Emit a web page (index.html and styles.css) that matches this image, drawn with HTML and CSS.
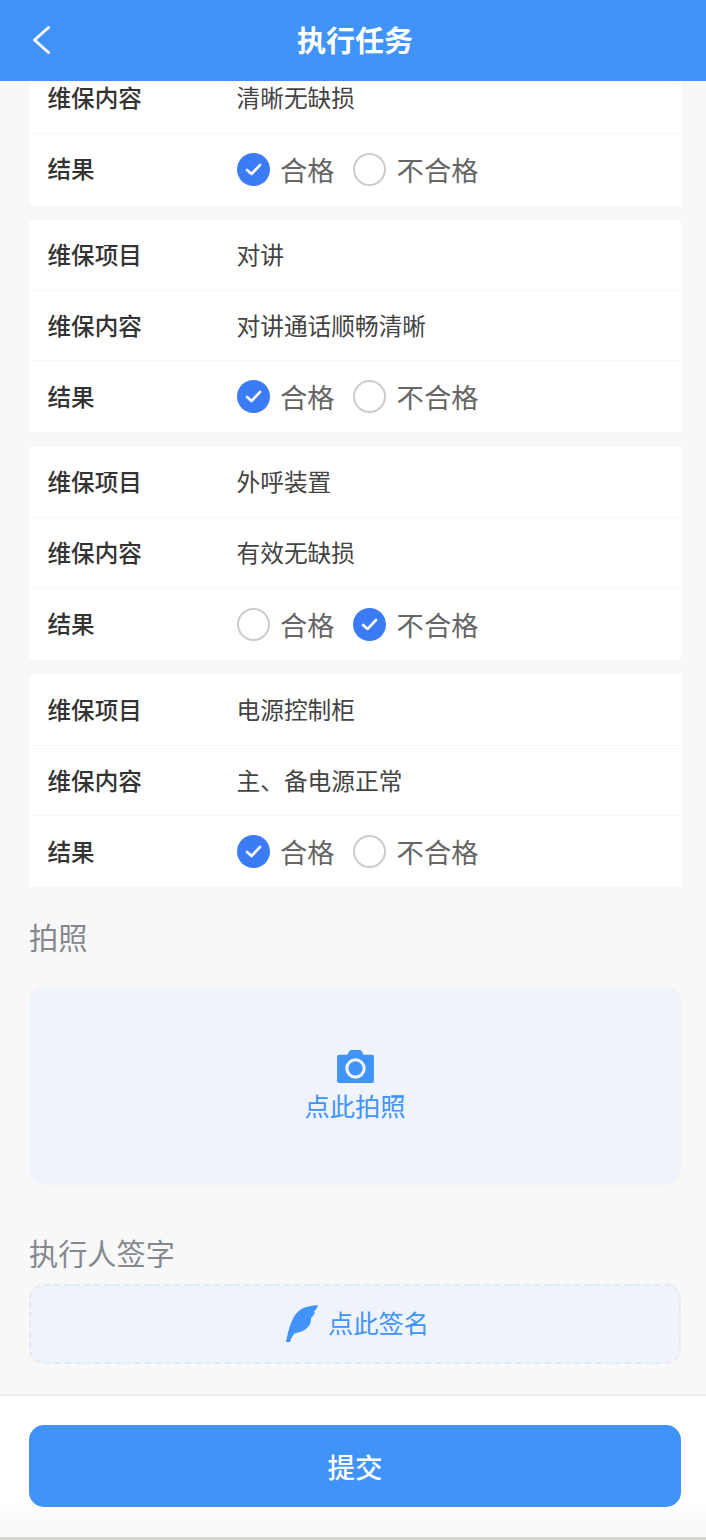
FILE: index.html
```html
<!DOCTYPE html>
<html lang="zh-CN">
<head>
    <meta charset="UTF-8">
    <meta name="viewport" content="width=device-width, initial-scale=1.0">
    <title>执行任务</title>
    <link rel="stylesheet" href="styles.css">
</head>
<body>

    <header class="topbar">
        <svg class="back" width="20" height="32" viewBox="0 0 20 32"><polyline points="18.500,3.500 4.500,16 18.500,28.500" fill="none" stroke="#fff" stroke-width="3" stroke-linecap="round" stroke-linejoin="round"/></svg>
        <h1>执行任务</h1>
    </header>

    <main class="content">
        <div class="card">
            <div class="row row-cut"><span class="label">维保内容</span><span class="value">清晰无缺损</span></div>
            <div class="row"><span class="label">结果</span>
                <div class="options">
                    <span class="radio on"><svg width="19" height="15" viewBox="0 0 19 15"><polyline points="3,8 7.5,12 16,3" fill="none" stroke="#fff" stroke-width="2.6" stroke-linecap="round" stroke-linejoin="round"/></svg></span><span class="opt">合格</span>
                    <span class="radio"></span><span class="opt">不合格</span>
                </div>
            </div>
        </div>

        <div class="card">
            <div class="row"><span class="label">维保项目</span><span class="value">对讲</span></div>
            <div class="row"><span class="label">维保内容</span><span class="value">对讲通话顺畅清晰</span></div>
            <div class="row"><span class="label">结果</span>
                <div class="options">
                    <span class="radio on"><svg width="19" height="15" viewBox="0 0 19 15"><polyline points="3,8 7.5,12 16,3" fill="none" stroke="#fff" stroke-width="2.6" stroke-linecap="round" stroke-linejoin="round"/></svg></span><span class="opt">合格</span>
                    <span class="radio"></span><span class="opt">不合格</span>
                </div>
            </div>
        </div>

        <div class="card">
            <div class="row"><span class="label">维保项目</span><span class="value">外呼装置</span></div>
            <div class="row"><span class="label">维保内容</span><span class="value">有效无缺损</span></div>
            <div class="row"><span class="label">结果</span>
                <div class="options">
                    <span class="radio"></span><span class="opt">合格</span>
                    <span class="radio on"><svg width="19" height="15" viewBox="0 0 19 15"><polyline points="3,8 7.5,12 16,3" fill="none" stroke="#fff" stroke-width="2.6" stroke-linecap="round" stroke-linejoin="round"/></svg></span><span class="opt">不合格</span>
                </div>
            </div>
        </div>

        <div class="card">
            <div class="row"><span class="label">维保项目</span><span class="value">电源控制柜</span></div>
            <div class="row"><span class="label">维保内容</span><span class="value">主、备电源正常</span></div>
            <div class="row"><span class="label">结果</span>
                <div class="options">
                    <span class="radio on"><svg width="19" height="15" viewBox="0 0 19 15"><polyline points="3,8 7.5,12 16,3" fill="none" stroke="#fff" stroke-width="2.6" stroke-linecap="round" stroke-linejoin="round"/></svg></span><span class="opt">合格</span>
                    <span class="radio"></span><span class="opt">不合格</span>
                </div>
            </div>
        </div>

        <h2 class="section-title photo-title">拍照</h2>
        <div class="photo-box">
            <svg width="37" height="33" viewBox="0 0 38 34"><path fill="#4093f9" fill-rule="evenodd" d="M2 5h8.500l2-3.500Q13.500 0 15 0h8q1.500 0 2.500 1.500l2 3.500H36q2 0 2 2v25q0 2-2 2H2q-2 0-2-2V7q0-2 2-2ZM19 8.500a10.500 10.500 0 1 0 0 21 10.500 10.500 0 0 0 0-21Z"/><circle cx="19" cy="19" r="7.300" fill="#4093f9"/></svg>
            <span class="action">点此拍照</span>
        </div>

        <h2 class="section-title sign-title">执行人签字</h2>
        <div class="sign-box">
            <svg class="feather" width="33" height="37" viewBox="0 0 33 37"><path fill="#4093f9" d="M32 0C26 .5 19 1.500 14 5 7 10 3 21 0 37h4c1-4 3-8 6-9 5-1 11-3 14-9 1-2 1-4 1-6 2-2 4-4 4-6l-2 .5C30 5 31 2.500 32 0Z"/></svg>
            <span class="action">点此签名</span>
        </div>
    </main>

    <footer class="bottombar">
        <button class="submit">提交</button>
    </footer>

</body>
</html>
```

FILE: styles.css
```css
* {
    box-sizing: border-box;
}
html, body {
    height: 100%;
}
body {
    margin: 0;
    height: 1540px;
    display: flex;
    flex-direction: column;
    overflow: hidden;
    font-family: "Noto Sans CJK SC", "Noto Sans", sans-serif;
    background-color: #f8f8f8;
    color: #333;
}
.topbar {
    height: 81px;
    flex: none;
    padding: 0 0 3px 4px;
    background-color: #4093f9;
    display: flex;
    align-items: center;
    justify-content: center;
    position: relative;
}
.topbar h1 {
    margin: 0;
    font-size: 29px;
    font-weight: 700;
    color: #fff;
}
.back {
    position: absolute;
    left: 30px;
    top: 24px;
}
.content {
    flex: 1;
    padding: 0 25px 0 29px;
}
.card {
    background: #fff;
    margin-bottom: 15px;
}
.card:nth-of-type(4) {
    margin-bottom: 0;
}
.row {
    height: 70.830px;
    padding-left: 18.500px;
    display: flex;
    align-items: center;
    border-bottom: 1px solid #f6f6f6;
}
.row:last-child {
    border-bottom: none;
}
.row-cut {
    height: 53px;
    align-items: flex-start;
}
.label {
    width: 189px;
    flex: none;
    margin-bottom: 2px;
    font-size: 23.600px;
    font-weight: 500;
    color: #333;
}
.value {
    margin-bottom: 2px;
    font-size: 23.700px;
    color: #444;
}
.row-cut .label,
.row-cut .value {
    line-height: 32px;
}
.options {
    display: flex;
    align-items: center;
}
.radio {
    width: 33px;
    height: 33px;
    border-radius: 50%;
    border: 2px solid #ccc;
    background: #fff;
    display: flex;
    align-items: center;
    justify-content: center;
}
.radio.on {
    border: none;
    background-color: #3b7cf6;
}
.opt {
    margin-left: 10.500px;
    margin-right: 18.500px;
    margin-bottom: 1px;
    font-size: 27.300px;
    color: #666;
}
.section-title {
    margin: 0;
    font-size: 29.200px;
    font-weight: 400;
    color: #85898f;
    line-height: 42px;
}
.photo-title {
    padding-top: 28px;
    height: 99.500px;
}
.sign-title {
    padding-top: 46px;
    height: 99px;
}
.photo-box {
    height: 198px;
    background-color: #eff3fb;
    border-radius: 15px;
    display: flex;
    flex-direction: column;
    align-items: center;
    justify-content: center;
    gap: 4px;
    padding-top: 2px;
}
.sign-box {
    height: 80.500px;
    background-color: #eff3fb;
    border: 2px dashed #e7e9f0;
    border-radius: 15px;
    display: flex;
    align-items: center;
    justify-content: center;
    gap: 9px;
    padding: 0 0 4px 5px;
}
.feather {
    margin-top: 3px;
}
.action {
    font-size: 25.300px;
    line-height: 36px;
    color: #4093f9;
}
.bottombar {
    flex: none;
    height: 146px;
    padding: 29px 25px 0 29px;
    border-top: 2px solid #ebebef;
    border-bottom: 3px solid #d8d6d0;
    background: linear-gradient(to bottom, #fff 75%, #f7f7f9 100%);
}
.submit {
    width: 652px;
    height: 82px;
    border: none;
    border-radius: 15px;
    background-color: #4093f9;
    color: #fff;
    font-family: inherit;
    font-size: 27.500px;
    font-weight: 500;
    cursor: pointer;
}
```
